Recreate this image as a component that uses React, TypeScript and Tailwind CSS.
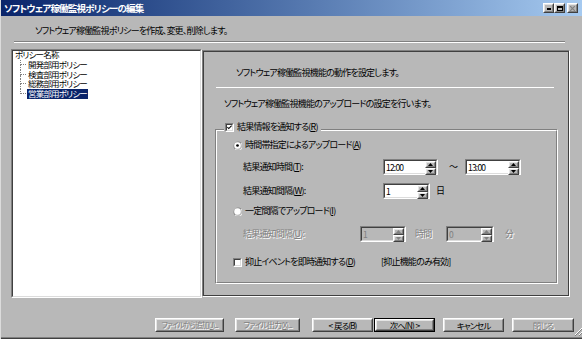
import React from "react";

const font =
  "font-['Noto_Sans_CJK_JP','Noto_Sans_CJK_SC',sans-serif] [font-feature-settings:'palt'] tracking-[-0.8px]";
const dis = "text-[#808080] [text-shadow:1px_1px_0_#ffffff]";

function Raised({ children, className = "", inner = "" }: { children?: React.ReactNode; className?: string; inner?: string }) {
  return (
    <div className={`border border-t-white border-l-white border-b-[#404040] border-r-[#404040] ${className}`}>
      <div className={`h-full w-full border border-t-[#e4e4e4] border-l-[#e4e4e4] border-b-[#808080] border-r-[#808080] flex items-center justify-center ${inner}`}>
        {children}
      </div>
    </div>
  );
}

function Sunken({ children, className = "", inner = "" }: { children?: React.ReactNode; className?: string; inner?: string }) {
  return (
    <div className={`border border-t-[#808080] border-l-[#808080] border-b-white border-r-white ${className}`}>
      <div className={`h-full w-full border border-t-[#404040] border-l-[#404040] border-b-[#dcdcdc] border-r-[#dcdcdc] ${inner}`}>
        {children}
      </div>
    </div>
  );
}

function Arrow({ up, disabled }: { up?: boolean; disabled?: boolean }) {
  const c = disabled ? "#808080" : "#000";
  return (
    <svg width="5" height="3" viewBox="0 0 5 3">
      {up ? <path d="M2.5 0 L5 3 L0 3 Z" fill={c} /> : <path d="M0 0 L5 0 L2.5 3 Z" fill={c} />}
    </svg>
  );
}

function Spin({ value, className, disabled }: { value: string; className: string; disabled?: boolean }) {
  return (
    <Sunken className={`h-[16px] ${className}`} inner={`flex ${disabled ? "bg-[#b8b8b8]" : "bg-white"}`}>
      <div className={`flex-1 pl-[1px] leading-[12px] text-[8.5px] ${disabled ? "text-[#808080]" : "text-black"}`}>{value}</div>
      <div className="w-[11px] flex flex-col">
        <Raised className="h-[7px] bg-[#b8b8b8]"><Arrow up disabled={disabled} /></Raised>
        <Raised className="h-[7px] bg-[#b8b8b8]"><Arrow disabled={disabled} /></Raised>
      </div>
    </Sunken>
  );
}

function Check({ checked }: { checked?: boolean }) {
  return (
    <Sunken className="w-[9px] h-[9px] shrink-0" inner="bg-white flex items-center justify-center">
      {checked && (
        <svg width="7" height="7" viewBox="0 0 7 7">
          <path d="M0.5 3 L2.5 5 L6.5 1" stroke="#000" strokeWidth="1.5" fill="none" />
        </svg>
      )}
    </Sunken>
  );
}

function Radio({ on }: { on?: boolean }) {
  return (
    <svg width="9" height="9" viewBox="0 0 12 12" className="shrink-0">
      <path d="M11 3 A5.5 5.5 0 1 0 3 11" stroke="#808080" strokeWidth="1.2" fill="none" />
      <path d="M3 11 A5.5 5.5 0 0 0 11 3" stroke="#ffffff" strokeWidth="1.2" fill="none" />
      <circle cx="6" cy="6" r="4.3" fill="#fff" />
      {on && <circle cx="6" cy="6" r="1.8" fill="#000" />}
    </svg>
  );
}

function TreeRow({ label, last, selected }: { label: string; last?: boolean; selected?: boolean }) {
  return (
    <div className="flex h-[9.75px] items-stretch">
      <div className="ml-[6px] w-[6px] flex flex-col">
        <div className="h-[5px] border-l border-b border-dotted border-[#808080]" />
        <div className={last ? "flex-1" : "flex-1 border-l border-dotted border-[#808080]"} />
      </div>
      <div className={`ml-[1px] px-[1px] leading-[9.75px] ${selected ? "bg-[#0a246a] text-white" : "text-black"}`}>{label}</div>
    </div>
  );
}

function Btn({ children, className, disabled, def, size = "text-[8.5px]" }: { children: React.ReactNode; className: string; disabled?: boolean; def?: boolean; size?: string }) {
  const b = (
    <Raised className="h-full w-full" inner={`whitespace-nowrap overflow-hidden leading-[10px] tracking-[-1px] ${size} ${disabled ? dis : "text-black"}`}>
      {children}
    </Raised>
  );
  if (def) return <div className={`h-[14px] border border-black ${className}`}>{b}</div>;
  return <div className={`h-[14px] ${className}`}>{b}</div>;
}

export default function App() {
  return (
    <div className={`w-[582px] h-[339px] bg-[#b8b8b8] flex flex-col overflow-hidden border-l border-l-[#dcdcdc] ${font} text-[9px] text-black`}>
      {/* title bar */}
      <div className="h-[16px] shrink-0 bg-linear-to-r from-[#0a246a] to-[#a6caf0] flex items-center pl-[3px] pr-[4px]">
        <span className="text-white font-bold text-[9.5px] leading-[12px]">ソフトウェア稼働監視ポリシーの編集</span>
        <div className="ml-auto flex items-center">
          <Raised className="w-[11px] h-[10px] bg-[#b8b8b8]" inner="items-end pb-[1px]">
            <div className="w-[4px] h-[2px] bg-black" />
          </Raised>
          <Raised className="w-[11px] h-[10px] bg-[#b8b8b8]">
            <div className="w-[6px] h-[5px] border border-t-2 border-black" />
          </Raised>
          <Raised className="ml-[2px] w-[11px] h-[10px] bg-[#b8b8b8]">
            <svg width="5" height="5" viewBox="0 0 5 5"><path d="M0 0 L5 5 M5 0 L0 5" stroke="#808080" strokeWidth="1.2" /></svg>
          </Raised>
        </div>
      </div>

      {/* header */}
      <div className="h-[25px] shrink-0 pt-[9px] pl-[34px] leading-[12px]">ソフトウェア稼働監視ポリシーを作成、変更、削除します。</div>
      <div className="ml-[13px] w-[551px] h-[2px] shrink-0 border-t border-t-[#808080] border-b border-b-white" />

      {/* main */}
      <div className="mt-[6px] pl-[10px] flex items-start shrink-0">
        <Sunken className="w-[191px] h-[249px]" inner="bg-white pl-[1px] text-[8.5px]">
          <div className="pl-[1px] h-[9.75px] leading-[9.75px] -mt-[1px]">ポリシー名称</div>
          <TreeRow label="開発部用ポリシー" />
          <TreeRow label="検査部用ポリシー" />
          <TreeRow label="総務部用ポリシー" />
          <TreeRow label="営業部用ポリシー" last selected />
        </Sunken>

        <div className="mt-[1px] w-[368px] h-[247px] border border-t-[#808080] border-l-[#808080] border-b-white border-r-white">
          <div className="h-full w-full border border-[#404040] flex flex-col">
            <div className="pt-[15px] pl-[32px] leading-[12px]">ソフトウェア稼働監視機能の動作を設定します。</div>
            <div className="mt-[8px] ml-[12px] w-[338px] h-[1px] bg-white" />
            <div className="mt-[10px] pl-[20px] leading-[12px]">ソフトウェア稼働監視機能のアップロードの設定を行います。</div>

            {/* group box */}
            <div className="mt-[19px] ml-[11px] w-[343px] h-[155px] border border-t-[#808080] border-l-[#808080] border-b-white border-r-white">
              <div className="h-full w-full border border-t-white border-l-white border-b-[#808080] border-r-[#808080] flex flex-col">
                <div className="-mt-[10px] ml-[7px] self-start bg-[#b8b8b8] px-[1px] h-[12px] flex items-center gap-[3px] pr-[3px]">
                  <Check checked />
                  <span className="leading-[12px]">結果情報を通知する(<u>R</u>)</span>
                </div>

                <div className="mt-[6px] ml-[16px] h-[12px] flex items-center gap-[3px]">
                  <Radio on />
                  <span className="leading-[12px]">時間帯指定によるアップロード(<u>A</u>)</span>
                </div>

                <div className="mt-[8px] ml-[26px] flex items-center">
                  <span className="w-[140px] leading-[12px]">結果通知時間(<u>T</u>):</span>
                  <Spin value="12:00" className="w-[55px]" />
                  <span className="ml-[11px] w-[16px] leading-[12px]">～</span>
                  <Spin value="13:00" className="w-[56px]" />
                </div>

                <div className="mt-[8px] ml-[26px] flex items-center">
                  <span className="w-[140px] leading-[12px]">結果通知間隔(<u>W</u>):</span>
                  <Spin value="1" className="w-[47px]" />
                  <span className="ml-[6px] leading-[12px]">日</span>
                </div>

                <div className="mt-[6px] ml-[16px] h-[12px] flex items-center gap-[3px]">
                  <Radio />
                  <span className="leading-[12px]">一定間隔でアップロード(<u>I</u>)</span>
                </div>

                <div className="mt-[9px] ml-[26px] flex items-center">
                  <span className={`w-[117px] leading-[12px] ${dis}`}>結果通知間隔(<u>U</u>):</span>
                  <Spin value="1" className="w-[46px]" disabled />
                  <span className={`ml-[9px] w-[31px] leading-[12px] ${dis}`}>時間</span>
                  <Spin value="0" className="w-[48px]" disabled />
                  <span className={`ml-[11px] leading-[12px] ${dis}`}>分</span>
                </div>

                <div className="mt-[14px] ml-[16px] h-[12px] flex items-center">
                  <Check />
                  <span className="ml-[3px] w-[136px] leading-[12px]">抑止イベントを即時通知する(<u>D</u>)</span>
                  <span className="leading-[12px]">[抑止機能のみ有効]</span>
                </div>
              </div>
            </div>
          </div>
        </div>
      </div>

      {/* bottom */}
      <div className="flex-1 flex items-stretch pt-[20px]">
        <div className="flex items-start pl-[154px]">
          <Btn className="w-[69px]" size="text-[7.5px]" disabled>ファイルから追加(<u>J</u>)...</Btn>
          <Btn className="ml-[11px] w-[65px]" size="text-[8px]" disabled>ファイル出力(<u>X</u>)...</Btn>
          <Btn className="ml-[12px] w-[61px]">&lt;&nbsp; 戻る(<u>B</u>)</Btn>
          <Btn className="ml-[1px] w-[61px]" def>次へ(<u>N</u>)&nbsp; &gt;</Btn>
          <Btn className="ml-[8px] w-[61px]">キャンセル</Btn>
          <Btn className="ml-[8px] w-[62px]" disabled>閉じる</Btn>
        </div>
        <div className="ml-auto self-end mr-[1px] mb-[1px]">
          <svg width="11" height="11" viewBox="0 0 11 11">
            <path d="M10 1 L1 10 M10 5 L5 10 M10 9 L9 10" stroke="#ffffff" strokeWidth="1" />
            <path d="M11 1 L1 11 M11 5 L5 11 M11 9 L9 11" stroke="#808080" strokeWidth="1" />
          </svg>
        </div>
      </div>
      <div className="h-[1px] bg-[#808080] shrink-0" />
      <div className="h-[1px] bg-[#404040] shrink-0" />
    </div>
  );
}
